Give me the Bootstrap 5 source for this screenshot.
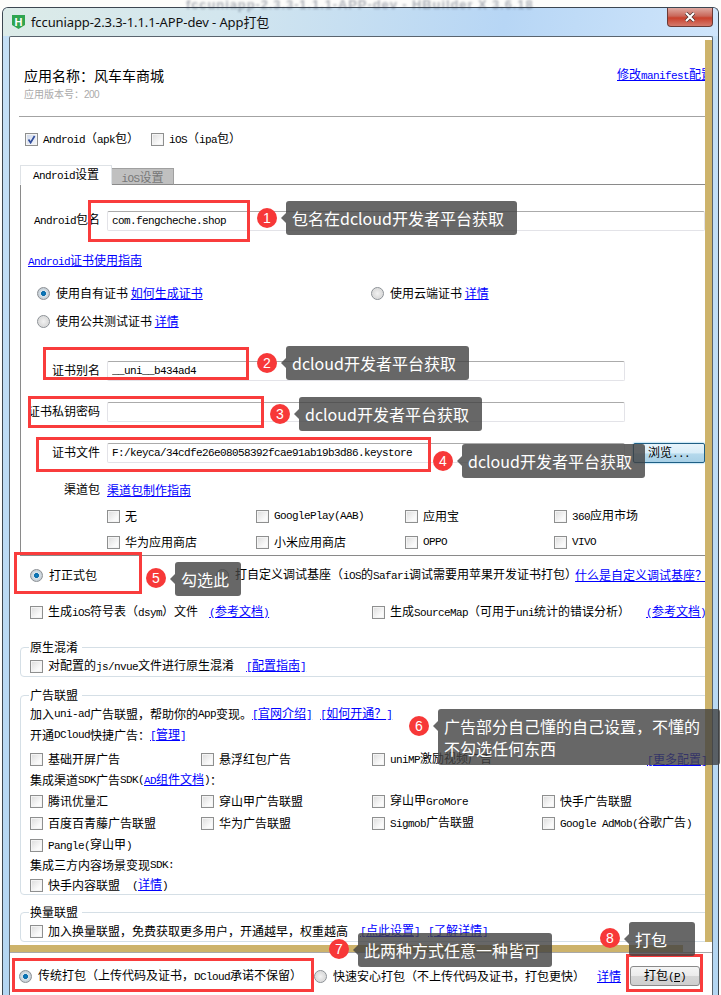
<!DOCTYPE html>
<html lang="zh-CN">
<head>
<meta charset="utf-8">
<title>App打包</title>
<link href="https://cdn.jsdelivr.net/npm/bootstrap@5.3.0/dist/css/bootstrap.min.css" rel="stylesheet">
<style>
html,body{margin:0;padding:0;background:#fdfdfb}
body{font:12px/16px "Noto Sans CJK SC","Liberation Sans",sans-serif;color:#000}
a{color:#00f;text-decoration:underline}
.lat{font-family:"Liberation Mono",monospace;font-size:11px;letter-spacing:-.6px}
.stage{position:relative;width:721px;height:995px;overflow:hidden}
.ghost{position:absolute;left:186px;top:-3px;font:13px/16px "Liberation Sans",sans-serif;letter-spacing:.9px;font-weight:700;color:rgba(50,60,80,.4);filter:blur(1.3px);white-space:nowrap}
.winframe{width:717px;height:988px;margin:7px 0 0 2px;border:1px solid #3c4650;border-bottom:0;border-radius:6px 6px 0 0;background:linear-gradient(180deg,#c5e0f6,#b4d6f2);display:flex;flex-direction:column;overflow:hidden}
.titlebar{height:28px;flex:none;display:flex;align-items:center;padding-left:9px;background:linear-gradient(100deg,#dcebe8 0,#d3e6ee 30%,#b7d6f5 70%,#cfe5fb 100%);position:relative}
.apptitle{font:13px/18px "Noto Sans","Noto Sans CJK SC",sans-serif;margin-left:6px;color:#111;letter-spacing:-.1px}
.closebtn{position:absolute;right:5px;top:0;width:46px;height:19px;border:1px solid #6b3a35;border-top:0;border-radius:0 0 4px 4px;background:linear-gradient(180deg,#dfa9a0 0,#c9675a 45%,#c9402c 55%,#d47a6c 100%);display:flex;align-items:center;justify-content:center}
.client{flex:1;margin:0 5px 0 6px;border:1px solid #5a646e;border-bottom:0;background:#fff;display:flex;flex-direction:column;min-height:0;border-radius:2px 2px 0 0}
.scrollwrap{height:908px;flex:none;display:flex;overflow:hidden}
.scroller{width:695px;flex:none;overflow:hidden}
.tanbar{width:8px;flex:none;margin-top:3px;height:902px;background:#cdb36b}
.head{padding:28px 0 14px 14px}
.appname{font-size:14px;line-height:20px}
.appver{font-size:10px;line-height:14px;margin-top:2px;color:#aaa}
.appver span{font-size:10px;letter-spacing:-.6px;font-family:"Liberation Sans",sans-serif}
.manifest{position:absolute;left:617px;top:65px;width:88px;white-space:nowrap;overflow:hidden;line-height:18px}
.sepline{height:1px;background:#a3a3a3;margin-left:9px}
.platrow{height:46px;padding-left:15px;padding-bottom:2px;display:flex;align-items:center;gap:12px}
.item{display:inline-flex;align-items:center;gap:5px;white-space:nowrap;height:16px}
.item.wide{gap:6px}
.cbx{appearance:none;width:13px;height:13px;margin:0;flex:none;border:1px solid #8e8f8f;background:linear-gradient(135deg,#dcdcdc,#fafafa 70%);box-shadow:inset 0 0 0 1px #f4f4f4}
.cbx:checked{background:url("data:image/svg+xml,%3Csvg xmlns='http://www.w3.org/2000/svg' viewBox='0 0 11 11'%3E%3Cpath d='M2.5 5.5 4.6 8.6 8.6 2' fill='none' stroke='%23334f9c' stroke-width='1.7'/%3E%3C/svg%3E") center/11px no-repeat,linear-gradient(135deg,#cfd8ea,#f5f7fb)}
.rad{appearance:none;width:13px;height:13px;margin:0;flex:none;border-radius:50%;border:1px solid #8b9095;background:radial-gradient(circle at 50% 50%,#f2f2f2 0,#dcdcdc 60%,#f5f5f5 100%)}
.rad:checked{background:radial-gradient(circle at 50% 50%,#0b7fc4 0,#0a6aa8 28%,#d8e4ec 36%,#c5ccd2 70%,#eee 100%)}
.navstrip{margin-left:10px;height:20px;border-bottom:1px solid #8a8a8a;flex-wrap:nowrap;margin-top:2px}
.navstrip .nav-link{font-size:12px;line-height:15px;height:20px;padding:0;border-radius:0;text-align:center;color:#000;border:1px solid #8a8a8a;background:#fff;margin:0;width:92px;border-bottom-color:#fff}
.navstrip .off{width:62px;height:17px;margin-top:3px;padding-top:0;background:#c0c0c0;color:#777;border-color:#a0a0a0;border-left:0;border-bottom-color:#8a8a8a}
.panel{margin-left:10px;border-left:1px solid #8a8a8a;border-bottom:1px solid #8a8a8a;padding-bottom:3px;display:flow-root}
.frow{display:flex;align-items:center;height:20px;white-space:nowrap}
.flabel{width:79px;text-align:right;margin-right:7px;flex:none;padding-bottom:2px}
.finput{width:518px;height:20px;min-height:20px;flex:none;padding:0 4px;border-radius:2px;border:1px solid #e3e3e8;border-top-color:#ababab;font-family:"Liberation Mono",monospace;font-size:11px;letter-spacing:-.6px;line-height:18px;color:#000;box-shadow:none}
.finput.full{width:598px}
.browse{width:72px;height:20px;margin-left:8px;padding:0;font-size:12px;line-height:16px;border:1px solid #1f5f85;border-radius:2px;color:#000;background:linear-gradient(180deg,#e9f4fb 0,#d8edf8 50%,#b5d9ec 55%,#a8d0e6 100%);box-shadow:0 0 2px #4fb0e0}
.ind16{padding-left:16px}.ind7{padding-left:7px}.ind86{padding-left:86px}.ind20{padding-left:20px}
.ind86 .item{width:149px;flex:none}
.c334{width:334px;flex:none}
.c186{width:186px;flex:none}
.c342{width:342px;flex:none}
.ml8{margin-left:8px}.ml11{margin-left:11px}.ml12{margin-left:12px}
.tightlink{margin-left:-2px}
.fset{margin:0 -4px 0 10px;padding:0 0 2px 9px;border:1px solid #d5dfe6;border-radius:4px;min-width:0}
.fset legend{float:none;width:auto;font-size:12px;line-height:16px;margin:0 0 0 -1px;padding:0 4px 0 1px}
.fset .frow{height:16px}
.fset.noend{padding-bottom:1px}
.c171 .item{width:171px;flex:none}
.c171 .item.last{width:170px}
.morecfg{position:absolute;left:647px;top:751px;line-height:16px;color:#00f}
.tanline{height:8px;flex:none;width:673px;background:#cdb36b}
.footrow{flex:1;border-top:1px solid #a8a8a8;display:flex;align-items:flex-start;padding:13px 0 0 9px;white-space:nowrap;margin-top:-1px;position:relative}
.footrow .item,.footrow a{margin-top:2px}
.f295{width:295px;flex:none}.f283{width:283px;flex:none}.f33{width:33px;flex:none}
.packbtn{width:70px;height:20px;padding:0;font-size:12px;line-height:16px;border:1px solid #8a8a8a;border-radius:3px;color:#000;background:linear-gradient(180deg,#f5f5f5 0,#ebebeb 48%,#d6d6d6 52%,#cfcfcf 100%)}
.m3{margin-top:3px}.m4{margin-top:4px}.m5{margin-top:5px}.m6{margin-top:6px}.m8{margin-top:8px}.m9{margin-top:9px}.m10{margin-top:10px}.m12{margin-top:12px}.m17{margin-top:17px}.m20{margin-top:20px}.m21{margin-top:21px}.m26{margin-top:26px}.m30{margin-top:30px}
.redbox{position:absolute;border:3px solid #f93c3c;pointer-events:none}
.rb1{left:88px;top:200px;width:162px;height:42px}
.rb2{left:43px;top:347px;width:206px;height:33px}
.rb3{left:28px;top:396px;width:236px;height:32px}
.rb4{left:36px;top:437px;width:395px;height:35px}
.rb5{left:14px;top:552px;width:128px;height:42px}
.rb7{left:12px;top:958px;width:302px;height:34px}
.rb8{left:626px;top:954px;width:77px;height:38px}
.numdot{position:absolute;width:20px;height:20px;border-radius:50%;background:#f73838;color:#fff;font:14px/20px "Liberation Sans",sans-serif;text-align:center}
.d1{left:257px;top:208px}.d2{left:257px;top:353px}.d3{left:270px;top:404px}.d4{left:433px;top:451px}.d5{left:146px;top:568px}.d6{left:409px;top:716px}.d7{left:329px;top:939px}.d8{left:600px;top:928px}
.bubble{position:absolute;height:34px;padding:0 6px;background:rgba(65,65,65,.8);border-radius:3px;color:#fff;font:16px/34px "Noto Sans CJK SC","Liberation Sans",sans-serif;white-space:nowrap}
.bubble::before{content:"";position:absolute;left:-5px;top:12px;border:5px solid transparent;border-left:0;border-right-color:rgba(65,65,65,.8)}
.b1{left:286px;top:201px;width:231px}.b2{left:286px;top:346px;width:183px}.b3{left:299px;top:397px;width:183px}.b4{left:462px;top:444px;width:183px}.b5{left:175px;top:562px;width:66px}
.b6{left:438px;top:709px;width:282px;height:56px;line-height:22px;padding-top:6px}
.b7{left:358px;top:933px;width:194px}.b8{left:629px;top:922px;width:66px}
</style>
</head>
<body>
<div class="stage">
  <div class="winframe">
    <div class="titlebar">
      <svg width="13" height="14" viewBox="0 0 13 14"><path d="M0 0H13V10L6.5 14 0 10Z" fill="#2fa54f"/><text x="6.5" y="10.5" font-size="11" font-weight="700" fill="#fff" text-anchor="middle" font-family="Liberation Sans">H</text></svg>
      <span class="apptitle">fccuniapp-2.3.3-1.1.1-APP-dev - App打包</span>
      <div class="closebtn"><svg width="12" height="10" viewBox="0 0 12 10"><path d="M2 1 10 9M10 1 2 9" stroke="#3d2a2a" stroke-width="3.4"/><path d="M2 1 10 9M10 1 2 9" stroke="#fff" stroke-width="2.2"/></svg></div>
    </div>
    <div class="client">
      <div class="scrollwrap">
        <div class="scroller">
          <div class="head">
            <div class="appname">应用名称&#xFF1A;风车车商城</div>
            <div class="appver">应用版本号&#xFF1A;<span>200</span></div>
          </div>
          <div class="sepline"></div>
          <div class="platrow">
            <label class="item"><input class="cbx" type="checkbox" checked><span><span class="lat">Android</span>&#xFF08;<span class="lat">apk</span>包&#xFF09;</span></label>
            <label class="item"><input class="cbx" type="checkbox"><span><span class="lat">iOS</span>&#xFF08;<span class="lat">ipa</span>包&#xFF09;</span></label>
          </div>
          <ul class="nav nav-tabs navstrip">
            <li class="nav-item"><a class="nav-link active" href="#"><span class="lat">Android</span>设置</a></li>
            <li class="nav-item"><a class="nav-link off" href="#"><span class="lat">iOS</span>设置</a></li>
          </ul>
          <div class="panel">
            <div class="frow m26"><span class="flabel"><span class="lat">Android</span>包名</span><input class="form-control finput full" value="com.fengcheche.shop"></div>
            <div class="frow m20 ind7"><a href="#"><span class="lat">Android</span>证书使用指南</a></div>
            <div class="frow m12 ind16">
              <label class="item wide c334"><input class="rad" type="radio" name="cert" checked><span>使用自有证书 <a href="#">如何生成证书</a></span></label>
              <label class="item wide"><input class="rad" type="radio" name="cert"><span>使用云端证书 <a href="#">详情</a></span></label>
            </div>
            <div class="frow m8 ind16"><label class="item wide"><input class="rad" type="radio" name="cert"><span>使用公共测试证书 <a href="#">详情</a></span></label></div>
            <div class="frow m30"><span class="flabel">证书别名</span><input class="form-control finput" value="__uni__b434ad4"></div>
            <div class="frow m21"><span class="flabel">证书私钥密码</span><input class="form-control finput" value=""></div>
            <div class="frow m21"><span class="flabel">证书文件</span><input class="form-control finput" value="F:/keyca/34cdfe26e08058392fcae91ab19b3d86.keystore"><button class="btn browse" type="button">浏览<span class="lat">...</span></button></div>
            <div class="frow m17"><span class="flabel">渠道包</span><a href="#">渠道包制作指南</a></div>
            <div class="frow m6 ind86">
              <label class="item"><input class="cbx" type="checkbox"><span>无</span></label>
              <label class="item"><input class="cbx" type="checkbox"><span class="lat">GooglePlay(AAB)</span></label>
              <label class="item"><input class="cbx" type="checkbox"><span>应用宝</span></label>
              <label class="item"><input class="cbx" type="checkbox"><span><span class="lat">360</span>应用市场</span></label>
            </div>
            <div class="frow m6 ind86">
              <label class="item"><input class="cbx" type="checkbox"><span>华为应用商店</span></label>
              <label class="item"><input class="cbx" type="checkbox"><span>小米应用商店</span></label>
              <label class="item"><input class="cbx" type="checkbox"><span class="lat">OPPO</span></label>
              <label class="item"><input class="cbx" type="checkbox"><span class="lat">VIVO</span></label>
            </div>
          </div>
          <div class="frow m9 ind20">
            <label class="item wide c186"><input class="rad" type="radio" name="kind" checked><span>打正式包</span></label>
            <label class="item wide"><input class="rad" type="radio" name="kind"><span>打自定义调试基座&#xFF08;<span class="lat">iOS</span>的<span class="lat">Safari</span>调试需要用苹果开发证书打包&#xFF09;</span></label>
            <a class="tightlink" href="#">什么是自定义调试基座&#xFF1F;</a>
          </div>
          <div class="frow m17 ind20">
            <label class="item c342"><input class="cbx" type="checkbox"><span>生成<span class="lat">iOS</span>符号表&#xFF08;<span class="lat">dsym</span>&#xFF09;文件<a class="ml11" href="#"><span class="lat">(</span>参考文档<span class="lat">)</span></a></span></label>
            <label class="item"><input class="cbx" type="checkbox"><span>生成<span class="lat">SourceMap</span>&#xFF08;可用于<span class="lat">uni</span>统计的错误分析&#xFF09;</span><a class="ml11" href="#"><span class="lat">(</span>参考文档<span class="lat">)</span></a></label>
          </div>
          <fieldset class="fset m17">
            <legend>原生混淆</legend>
            <div class="frow m3"><label class="item"><input class="cbx" type="checkbox"><span>对配置的<span class="lat">js/nvue</span>文件进行原生混淆<a class="ml12" href="#"><span class="lat">[</span>配置指南<span class="lat">]</span></a></span></label></div>
          </fieldset>
          <fieldset class="fset m10 noend">
            <legend>广告联盟</legend>
            <div class="frow m3">加入<span class="lat">uni-ad</span>广告联盟&#xFF0C;帮助你的<span class="lat">App</span>变现。<a href="#"><span class="lat">[</span>官网介绍<span class="lat">]</span></a><a class="ml8" href="#"><span class="lat">[</span>如何开通&#xFF1F;<span class="lat">]</span></a></div>
            <div class="frow m5">开通<span class="lat">DCloud</span>快捷广告&#xFF1A;<a href="#"><span class="lat">[</span>管理<span class="lat">]</span></a></div>
            <div class="frow m8 c171">
              <label class="item"><input class="cbx" type="checkbox"><span>基础开屏广告</span></label>
              <label class="item"><input class="cbx" type="checkbox"><span>悬浮红包广告</span></label>
              <label class="item"><input class="cbx" type="checkbox"><span><span class="lat">uniMP</span>激励视频广告</span></label>
            </div>
            <div class="frow m5">集成渠道<span class="lat">SDK</span>广告<span class="lat">SDK(</span><a href="#"><span class="lat">AD</span>组件文档</a><span class="lat">)</span>&#xFF1A;</div>
            <div class="frow m5 c171">
              <label class="item"><input class="cbx" type="checkbox"><span>腾讯优量汇</span></label>
              <label class="item"><input class="cbx" type="checkbox"><span>穿山甲广告联盟</span></label>
              <label class="item last"><input class="cbx" type="checkbox"><span>穿山甲<span class="lat">GroMore</span></span></label>
              <label class="item"><input class="cbx" type="checkbox"><span>快手广告联盟</span></label>
            </div>
            <div class="frow m6 c171">
              <label class="item"><input class="cbx" type="checkbox"><span>百度百青藤广告联盟</span></label>
              <label class="item"><input class="cbx" type="checkbox"><span>华为广告联盟</span></label>
              <label class="item last"><input class="cbx" type="checkbox"><span><span class="lat">Sigmob</span>广告联盟</span></label>
              <label class="item"><input class="cbx" type="checkbox"><span><span class="lat">Google AdMob(</span>谷歌广告<span class="lat">)</span></span></label>
            </div>
            <div class="frow m6"><label class="item"><input class="cbx" type="checkbox"><span><span class="lat">Pangle(</span>穿山甲<span class="lat">)</span></span></label></div>
            <div class="frow m4">集成三方内容场景变现<span class="lat">SDK:</span></div>
            <div class="frow m4"><label class="item"><input class="cbx" type="checkbox"><span>快手内容联盟</span></label><span class="ml12"><span class="lat">(</span><a href="#">详情</a><span class="lat">)</span></span></div>
          </fieldset>
          <fieldset class="fset m9">
            <legend>换量联盟</legend>
            <div class="frow m3"><label class="item"><input class="cbx" type="checkbox"><span>加入换量联盟&#xFF0C;免费获取更多用户&#xFF0C;开通越早&#xFF0C;权重越高</span></label><a class="ml12" href="#"><span class="lat">[</span>点此设置<span class="lat">]</span></a><a class="ml8" href="#"><span class="lat">[</span>了解详情<span class="lat">]</span></a></div>
          </fieldset>
        </div>
        <div class="tanbar"></div>
      </div>
      <div class="tanline"></div>
      <div class="footrow">
        <label class="item wide f295"><input class="rad" type="radio" name="way" checked><span>传统打包&#xFF08;上传代码及证书&#xFF0C;<span class="lat">DCloud</span>承诺不保留&#xFF09;</span></label>
        <label class="item wide f283"><input class="rad" type="radio" name="way"><span>快速安心打包&#xFF08;不上传代码及证书&#xFF0C;打包更快&#xFF09;</span></label>
        <a class="f33" href="#">详情</a>
        <button class="btn packbtn" type="button">打包<span class="lat">(<u>P</u>)</span></button>
      </div>
    </div>
  </div>
  <a class="manifest" href="#">修改<span class="lat">manifest</span>配置</a>
  <a class="morecfg" href="#"><span class="lat">[</span>更多配置<span class="lat">]</span></a>
  <div class="ghost">fccuniapp-2.3.3-1.1.1-APP-dev - HBuilder X 3.6.18</div>

  <div class="redbox rb1"></div><div class="redbox rb2"></div><div class="redbox rb3"></div><div class="redbox rb4"></div><div class="redbox rb5"></div><div class="redbox rb7"></div><div class="redbox rb8"></div>

  <div class="numdot d1">1</div><div class="bubble b1">包名在dcloud开发者平台获取</div>
  <div class="numdot d2">2</div><div class="bubble b2">dcloud开发者平台获取</div>
  <div class="numdot d3">3</div><div class="bubble b3">dcloud开发者平台获取</div>
  <div class="numdot d4">4</div><div class="bubble b4">dcloud开发者平台获取</div>
  <div class="numdot d5">5</div><div class="bubble b5">勾选此</div>
  <div class="numdot d6">6</div><div class="bubble b6">广告部分自己懂的自己设置&#xFF0C;不懂的<br>不勾选任何东西</div>
  <div class="numdot d7">7</div><div class="bubble b7">此两种方式任意一种皆可</div>
  <div class="numdot d8">8</div><div class="bubble b8">打包</div>
</div>
<script src="https://cdn.jsdelivr.net/npm/bootstrap@5.3.0/dist/js/bootstrap.bundle.min.js"></script>
</body>
</html>
